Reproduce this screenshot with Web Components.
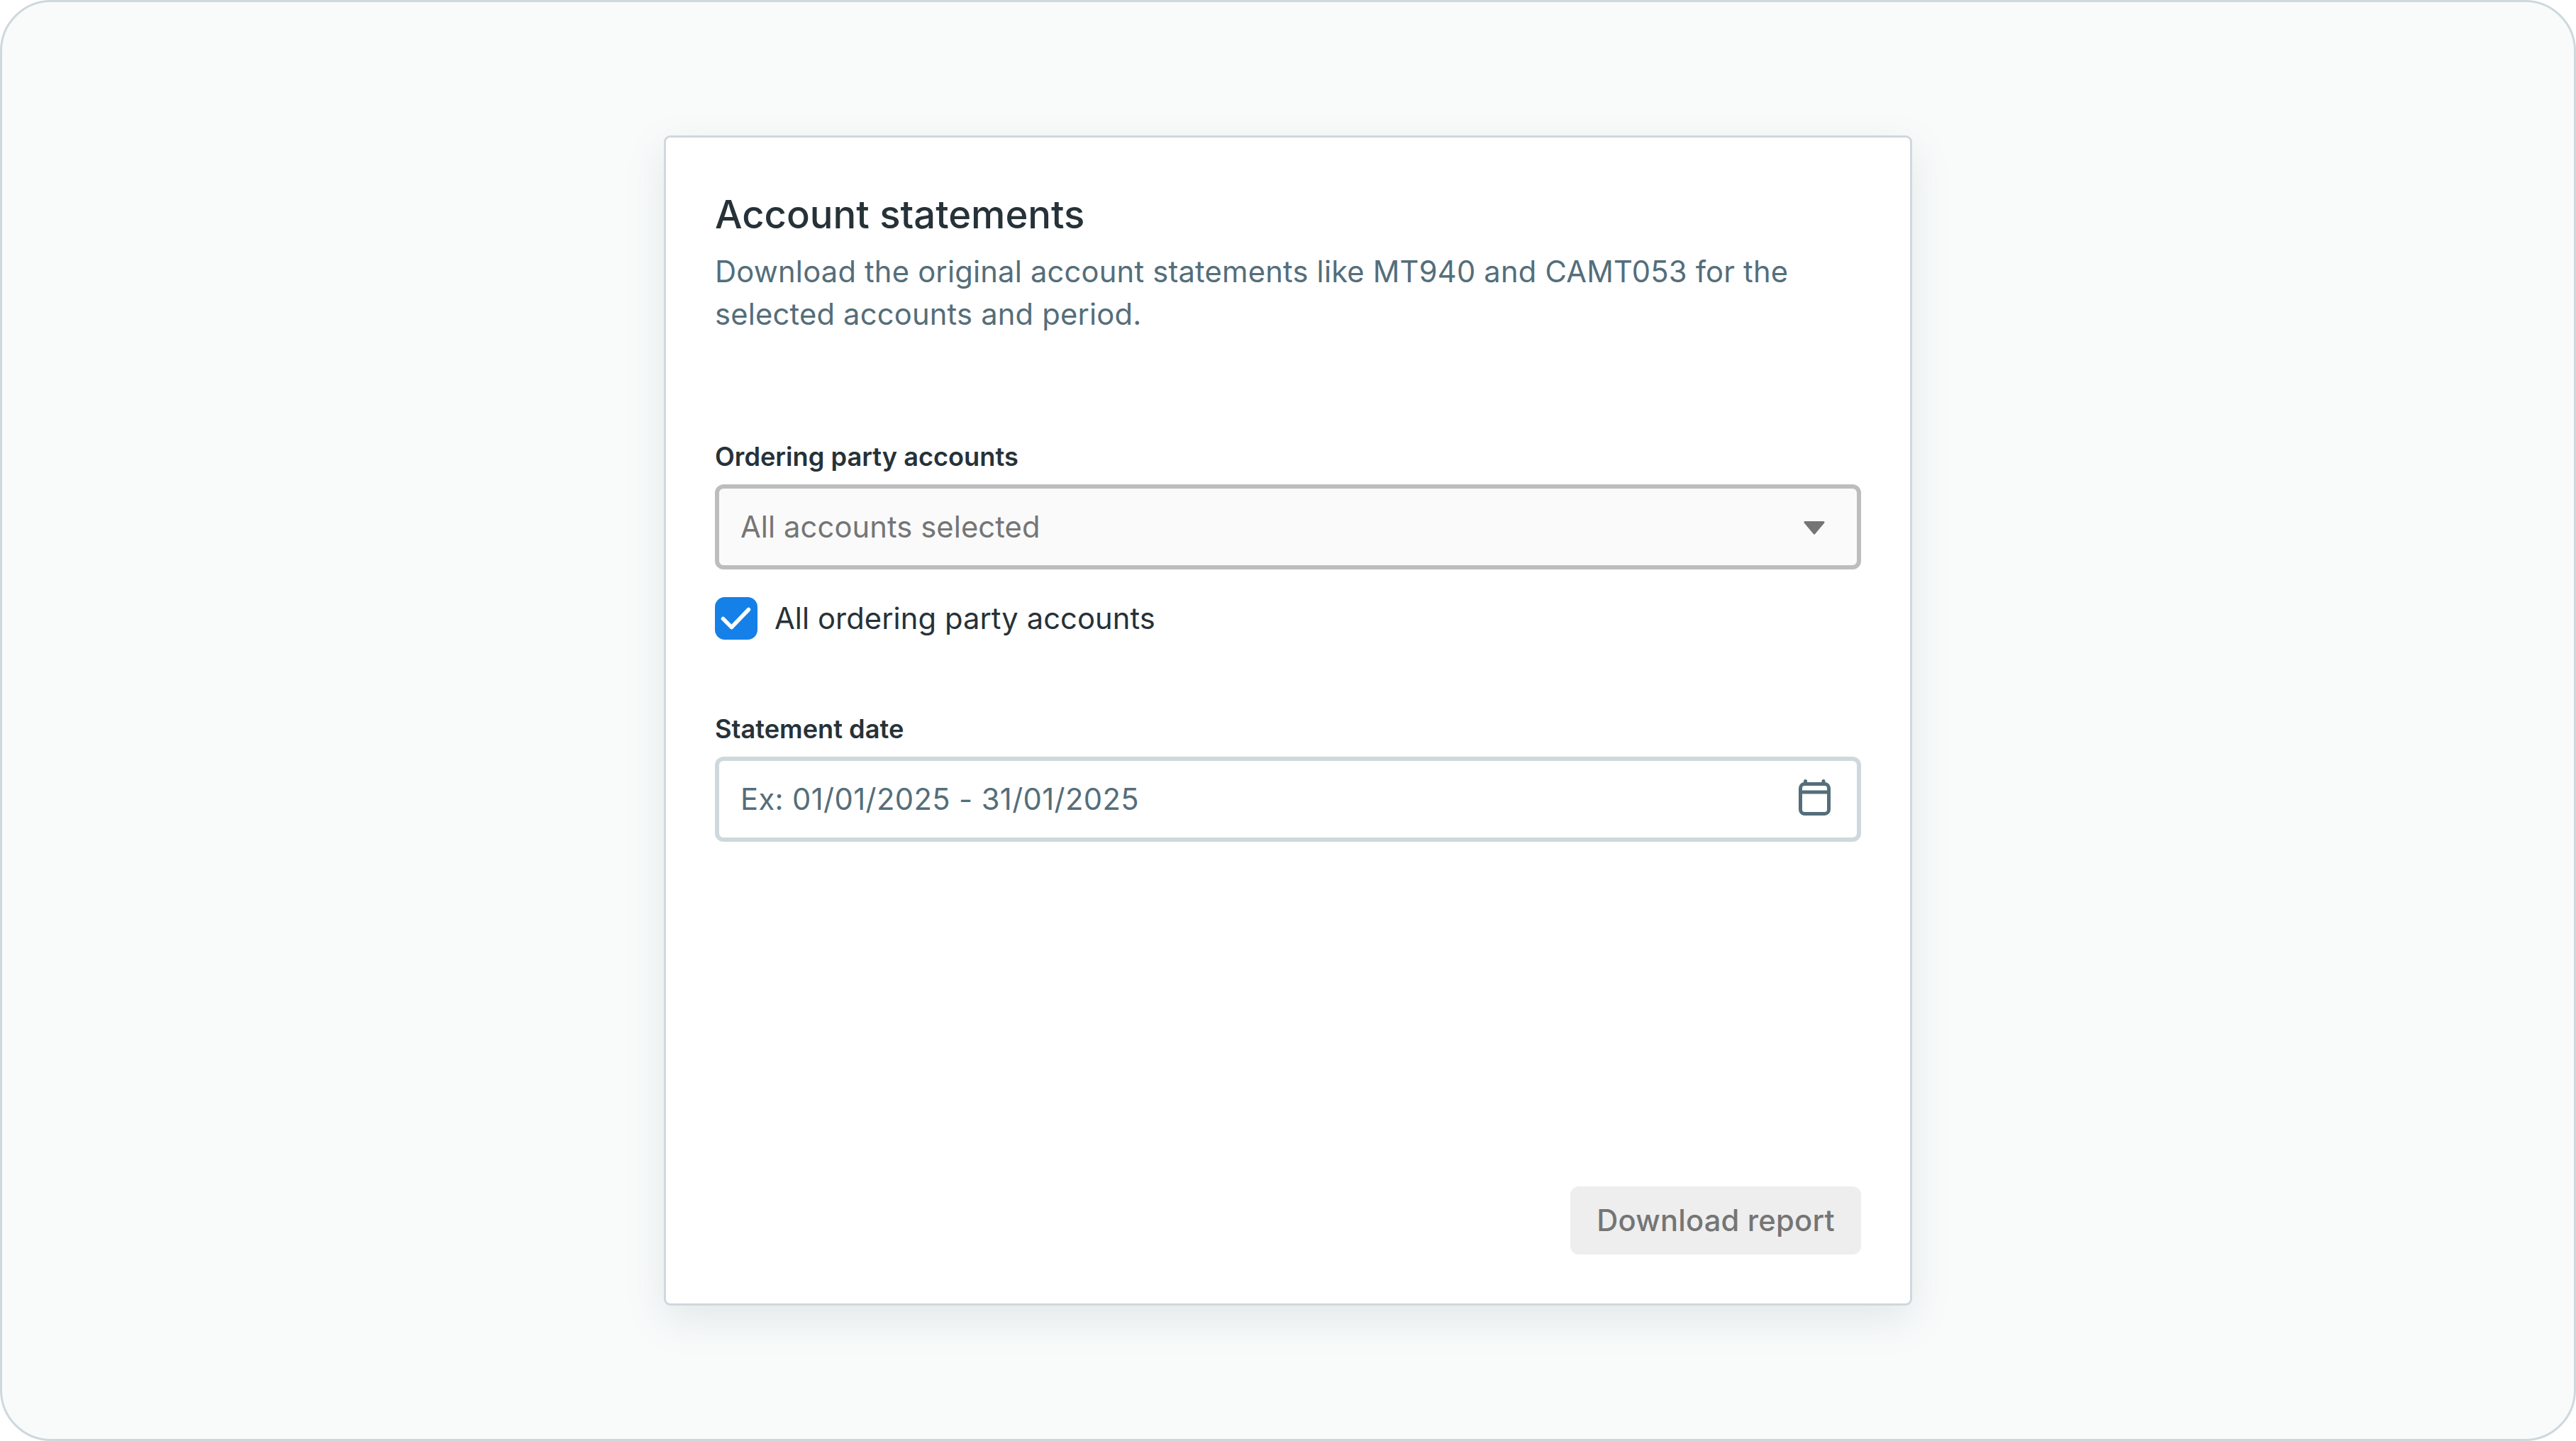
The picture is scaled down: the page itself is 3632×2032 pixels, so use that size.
<!DOCTYPE html>
<html>
<head>
<meta charset="utf-8">
<title>Account statements</title>
<style>
    html, body { margin: 0; padding: 0; }
    body { font-family: Inter, "Liberation Sans", sans-serif; }
</style>
</head>
<body>
<app-frame>
    <statement-card heading="Account statements">
        <span slot="description">Download the original account statements like MT940 and CAMT053 for the selected accounts and period.</span>
        <form-field label="Ordering party accounts">
            <field-box variant="disabled" text="All accounts selected">
                <svg slot="icon" class="caret" width="30" height="19" viewBox="0 0 30 19"><path d="M2 1.5H28L15 17Z" fill="#757575" stroke="#757575" stroke-width="3" stroke-linejoin="round"/></svg>
            </field-box>
        </form-field>
        <check-row>All ordering party accounts</check-row>
        <form-field label="Statement date" class="date">
            <field-box text="Ex: 01/01/2025 - 31/01/2025" style="--spacing: 0.38px">
                <svg slot="icon" class="calendar" width="45" height="51" viewBox="0 0 45 51" fill="none" stroke="#546e7a" stroke-width="5" stroke-linecap="round"><rect x="2.5" y="6.5" width="40" height="42" rx="6"/><path d="M2.5 18H42.5M9.5 2.5V6M35 2.5V6"/></svg>
            </field-box>
        </form-field>
        <action-button slot="footer">Download report</action-button>
    </statement-card>
</app-frame>

<script>
"use strict";
class AppFrame extends HTMLElement {
    constructor() {
        super();
        this.attachShadow({ mode: "open" });
        this.shadowRoot.innerHTML = `
            <style>
                :host {
                    display: flex;
                    align-items: center;
                    justify-content: center;
                    box-sizing: border-box;
                    width: 3632px;
                    height: 2032px;
                    background: #f9fbfb;
                    border: 3px solid #cfd8dc;
                    border-radius: 72px;
                    overflow: hidden;
                }
            </style>
            <slot></slot>
        `;
    }
}
customElements.define("app-frame", AppFrame);

class StatementCard extends HTMLElement {
    constructor() {
        super();
        this.attachShadow({ mode: "open" });
        this.shadowRoot.innerHTML = `
            <style>
                :host {
                    display: flex;
                    flex-direction: column;
                    box-sizing: border-box;
                    width: 1760px;
                    height: 1650px;
                    padding: 71px 69px 69px;
                    background: #fff;
                    border: 3px solid #cfd8dc;
                    border-radius: 9px;
                    box-shadow: 0 19px 56px rgba(84, 110, 122, 0.14);
                }
                h2 {
                    margin: 0 0 13.5px;
                    font-size: 54.4px;
                    line-height: 74px;
                    font-weight: 500;
                    color: #263238;
                }
                p {
                    margin: 0 0 147px;
                    font-size: 41.7px;
                    line-height: 60px;
                    letter-spacing: 0.2px;
                    color: #546e7a;
                }
                .body { flex: 1; }
                footer { display: flex; justify-content: flex-end; }
            </style>
            <h2></h2>
            <p><slot name="description"></slot></p>
            <div class="body"><slot></slot></div>
            <footer><slot name="footer"></slot></footer>
        `;
    }
    connectedCallback() {
        this.shadowRoot.querySelector("h2").textContent = this.getAttribute("heading");
    }
}
customElements.define("statement-card", StatementCard);

class FormField extends HTMLElement {
    constructor() {
        super();
        this.attachShadow({ mode: "open" });
        this.shadowRoot.innerHTML = `
            <style>
                :host { display: block; }
                :host(.date) { margin-top: 102px; }
                label {
                    display: block;
                    margin-bottom: 15px;
                    font-size: 36.2px;
                    line-height: 48px;
                    font-weight: 600;
                    color: #263238;
                }
            </style>
            <label></label>
            <slot></slot>
        `;
    }
    connectedCallback() {
        this.shadowRoot.querySelector("label").textContent = this.getAttribute("label");
    }
}
customElements.define("form-field", FormField);

class FieldBox extends HTMLElement {
    constructor() {
        super();
        this.attachShadow({ mode: "open" });
        this.shadowRoot.innerHTML = `
            <style>
                :host {
                    display: flex;
                    align-items: center;
                    justify-content: space-between;
                    box-sizing: border-box;
                    height: 120px;
                    padding: 0 37px 0 30px;
                    background: #fff;
                    border: 6px solid #cfd8dc;
                    border-radius: 12px;
                    font-size: 41.7px;
                    letter-spacing: var(--spacing, 0.1px);
                    color: #546e7a;
                }
                :host([variant="disabled"]) {
                    background: #fafafa;
                    border-color: #bdbdbd;
                    color: #757575;
                }
                ::slotted(svg) { display: block; }
                ::slotted(.caret) { margin: 4px 8px 0 0; }
                ::slotted(.calendar) { margin-bottom: 5px; }
            </style>
            <span></span>
            <slot name="icon"></slot>
        `;
    }
    connectedCallback() {
        this.shadowRoot.querySelector("span").textContent = this.getAttribute("text");
    }
}
customElements.define("field-box", FieldBox);

class CheckRow extends HTMLElement {
    constructor() {
        super();
        this.attachShadow({ mode: "open" });
        this.shadowRoot.innerHTML = `
            <style>
                :host {
                    display: flex;
                    align-items: center;
                    gap: 24px;
                    margin-top: 39px;
                    font-size: 41.7px;
                    line-height: 60px;
                    letter-spacing: 0.08px;
                    color: #263238;
                }
                .box {
                    width: 60px;
                    height: 60px;
                    border-radius: 14px;
                    background: #1580e8;
                    flex: none;
                }
                svg { display: block; }
            </style>
            <div class="box">
                <svg width="60" height="60" viewBox="0 0 60 60" fill="none" stroke="#fff" stroke-width="5.5" stroke-linecap="round" stroke-linejoin="round"><path d="M11.5 30.5L23.5 42.5L47.5 17.5"/></svg>
            </div>
            <slot></slot>
        `;
    }
}
customElements.define("check-row", CheckRow);

class ActionButton extends HTMLElement {
    constructor() {
        super();
        this.attachShadow({ mode: "open" });
        this.shadowRoot.innerHTML = `
            <style>
                :host {
                    display: flex;
                    align-items: center;
                    justify-content: center;
                    box-sizing: border-box;
                    height: 96px;
                    width: 410px;
                    background: #eeeeee;
                    border-radius: 12px;
                    font-size: 41.7px;
                    font-weight: 500;
                    letter-spacing: 0.2px;
                    color: #757575;
                }
            </style>
            <slot></slot>
        `;
    }
}
customElements.define("action-button", ActionButton);
</script>
</body>
</html>
